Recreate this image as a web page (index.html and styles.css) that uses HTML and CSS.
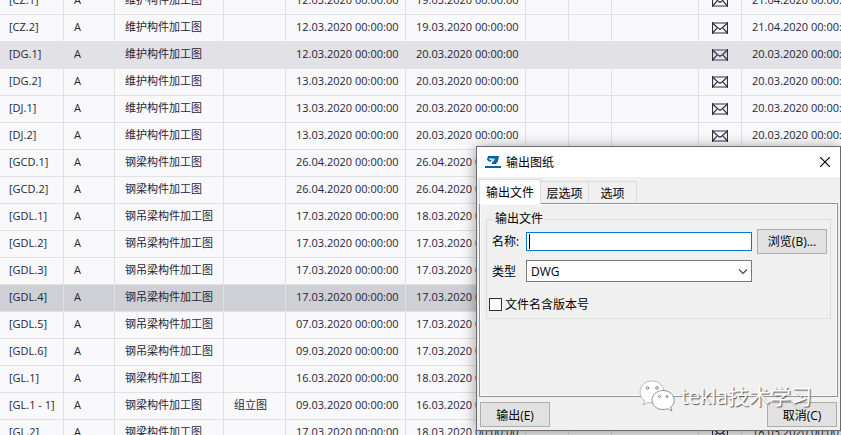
FILE: index.html
```html
<!DOCTYPE html>
<html lang="zh-CN">
<head>
  <meta charset="UTF-8">
  <title>输出图纸</title>
  <meta name="viewport" content="width=device-width, initial-scale=1.0">
  <link rel="stylesheet" href="styles.css">
</head>
<body>

  <svg class="defs" aria-hidden="true">
    <symbol id="mail" viewBox="0 0 16 12">
      <rect x="0" y="0" width="16" height="2" fill="#93929d"/>
      <rect x="0" y="10" width="16" height="2" fill="#93929d"/>
      <path d="M.5 0V12M15.5 0V12" fill="none" stroke="#2f2f45" stroke-width="1.2"/>
      <path d="M1 1.500L6 6L8 7.300L10 6L15 1.500M1 10.500L5 6.200M15 10.500L11 6.200" fill="none" stroke="#2f2f45" stroke-width="1.200"/>
    </symbol>
  </svg>

  <main class="list">
    <table class="drawings">
      <colgroup>
        <col class="c-mark"><col class="c-size"><col class="c-name"><col class="c-title">
        <col class="c-date"><col class="c-date"><col class="c-flag"><col class="c-flag">
        <col class="c-rev"><col class="c-flag"><col class="c-date">
      </colgroup>
      <tbody id="rows"></tbody>
    </table>
  </main>

  <section class="dialog" role="dialog" aria-labelledby="dlgTitle">
    <header class="titlebar">
      <svg class="logo" width="16" height="14" viewBox="0 0 16 14" aria-hidden="true">
        <rect x="0" y="11" width="16" height="2" fill="#0063a3"/>
        <path d="M3 1H14L13 6L11 9H7V7L9 6L7 5L5 7L2 5Z" fill="#0063a3"/>
        <path d="M3 4L6 3L8 4L10 3L9 6L6 5Z" fill="#d5e6f1"/>
      </svg>
      <h1 id="dlgTitle">输出图纸</h1>
      <button type="button" class="close" aria-label="关闭">
        <svg width="10" height="10" viewBox="0 0 10 10"><path d="M0 0L10 10M10 0L0 10" stroke="#000" stroke-width="1.2"/></svg>
      </button>
    </header>

    <form class="content" id="exportForm">
      <div class="tabs" role="tablist">
        <button type="button" class="tab active" role="tab" aria-selected="true">输出文件</button>
        <button type="button" class="tab" role="tab">层选项</button>
        <button type="button" class="tab" role="tab">选项</button>
      </div>

      <div class="pane" role="tabpanel">
        <fieldset class="group">
          <legend>输出文件</legend>
          <div class="field">
            <label for="name">名称:</label>
            <div class="box"><input type="text" id="name" class="name"><span class="caret"></span></div>
            <button type="button" class="btn">浏览(B)...</button>
          </div>
          <div class="field type">
            <label for="type">类型</label>
            <div class="box">
              <select id="type"><option>DWG</option></select>
              <svg class="arrow" width="10" height="6" viewBox="0 0 10 6" aria-hidden="true"><path d="M1 .5L5 4.5L9 .5" fill="none" stroke="#444" stroke-width="1.1"/></svg>
            </div>
          </div>
          <div class="check">
            <input type="checkbox" id="rev">
            <label for="rev">文件名含版本号</label>
          </div>
        </fieldset>
      </div>

      <div class="actions">
        <button type="button" class="btn">输出(E)</button>
        <button type="button" class="btn">取消(C)</button>
      </div>
    </form>

    <div class="watermark">
      <svg width="36" height="32" viewBox="0 0 36 32" aria-hidden="true">
        <g fill="#fff" stroke="#a0a0a0" stroke-width=".7">
          <path d="M13 1C6 1 1 6 1 12C1 16 3 19 6 21L4 25L9 22.500C17 24 25 20 25 12C25 6 20 1 13 1Z"/>
          <path stroke="#666" d="M24 10.500C17.500 10.500 13 15 13 20C13 25 17.500 29.500 24 29.500C26 29.500 27 29.200 28.500 28.700L33 31L31.800 27C34 25 35.300 23 35.300 20C35.300 15 30.500 10.500 24 10.500Z"/>
        </g>
        <g fill="#fff" stroke="#777" stroke-width=".9">
          <circle cx="8.500" cy="8" r="1.300"/><circle cx="18" cy="8" r="1.300"/>
          <circle cx="20.500" cy="16.500" r="1"/><circle cx="28" cy="16.500" r="1"/>
        </g>
      </svg>
      <span>tekla技术学习</span>
    </div>
  </section>

  <script src="script.js"></script>
</body>
</html>
```

FILE: styles.css
```css
* {
	box-sizing: border-box;
}

body {
	margin: 0;
	height: 100vh;
	overflow: hidden;
	position: relative;
	background-color: #f9f9fb;
	color: #252538;
	font-family: "Open Sans", "Noto Sans CJK SC", sans-serif;
	font-size: 11px;
}

.defs {
	display: none;
}

/* drawing list, scrolled part of a row down */
.list {
	height: 100vh;
	overflow: hidden;
}

.drawings {
	width: 862px;
	margin-top: -12px;
	table-layout: fixed;
	border-collapse: separate;
	border-spacing: 0;
}

.c-mark { width: 64px; }
.c-size { width: 51px; }
.c-name { width: 109px; }
.c-title { width: 62px; }
.c-date { width: 120px; }
.c-flag { width: 43px; }
.c-rev { width: 87px; }

.drawings td {
	height: 27px;
	padding: 0 0 2px 10px;
	border-right: 1px solid #e1e1e4;
	border-bottom: 1px solid #e1e1e4;
	line-height: 16px;
	white-space: nowrap;
}

.drawings td:first-child {
	padding-left: 9px;
}

.drawings td.mail {
	padding: 0;
	text-align: center;
}

.mail svg {
	display: block;
	margin: 0 auto;
}

.drawings .hover td {
	background-color: #e2e1e6;
	border-color: #e2e1e6;
}

.drawings .selected td {
	background-color: #cfd0d6;
}

/* export dialog */
.dialog {
	position: absolute;
	top: 146px;
	right: 0;
	width: 365px;
	border: 1px solid #6b6b6b;
	background-color: #f0f0f0;
	box-shadow: 0 2px 14px rgba(0, 0, 0, 0.4);
	color: #000;
	font-size: 12px;
}

.titlebar {
	display: flex;
	align-items: center;
	height: 30px;
	padding: 0 10px 0 8px;
	background-color: #fff;
}

.titlebar h1 {
	flex: 1;
	margin: 0 0 0 5px;
	font-size: 12px;
	font-weight: normal;
}

.close {
	display: flex;
	padding: 0;
	border: none;
	background: none;
}

.content {
	padding: 2px 2px 3px;
}

.tabs {
	display: flex;
	align-items: flex-end;
	height: 24px;
}

.tab {
	width: 48px;
	height: 22px;
	padding: 0;
	border: 1px solid #d9d9d9;
	border-left: none;
	border-bottom: none;
	background-color: #f0f0f0;
	color: #000;
	font: inherit;
}

.tab.active {
	position: relative;
	width: 62px;
	height: 25px;
	margin-bottom: -1px;
	border-left: 1px solid #d9d9d9;
	background-color: #fff;
}

.pane {
	height: 194px;
	padding: 6px 6px 0;
	border: 1px solid #8c9a9b;
	box-shadow: inset 0 0 0 1px #fafafa;
}

.group {
	height: 109px;
	margin: 0;
	padding: 0 3px 0 2px;
	border: 1px solid #dcdcdc;
}

.group legend {
	margin-left: 4px;
	padding: 0 2px;
	line-height: 18px;
}

.field {
	display: flex;
	align-items: center;
	height: 26px;
}

.field.type {
	height: 34px;
}

.field label {
	width: 37px;
	padding-left: 3px;
}

.box {
	position: relative;
	flex: 1;
}

.field.type .box {
	margin-right: 75px;
}

.box input,
.box select {
	display: block;
	width: 100%;
	border: 1px solid #7a7a7a;
	border-radius: 0;
	background-color: #fff;
	color: #000;
	font: inherit;
	outline: none;
	appearance: none;
}

.box input {
	height: 19px;
	padding: 0 4px;
	border-color: #0078d7;
}

.box select {
	height: 22px;
	padding: 0 4px;
}

.caret {
	position: absolute;
	top: 2px;
	left: 3px;
	width: 1px;
	height: 15px;
	background-color: #000;
}

.arrow {
	position: absolute;
	top: 9px;
	right: 4px;
	pointer-events: none;
}

.btn {
	width: 70px;
	height: 25px;
	padding: 0;
	border: 1px solid #adadad;
	background-color: #e1e1e1;
	color: #000;
	font: inherit;
}

.field .btn {
	margin-left: 5px;
}

.check {
	display: flex;
	align-items: center;
	height: 32px;
}

.check input {
	width: 13px;
	height: 13px;
	margin: 0 3px 0 0;
	border: 1px solid #333;
	background-color: #fff;
	appearance: none;
}

.actions {
	display: flex;
	justify-content: space-between;
	padding: 5px 1px 0;
}

.watermark {
	position: absolute;
	right: 28px;
	bottom: 18px;
	display: flex;
	align-items: center;
	gap: 6px;
	color: #fff;
	font-size: 21px;
	line-height: 28px;
	text-shadow: 1px 1px 1px #555;
	pointer-events: none;
}
```

FILE: script.js
```js
const rows = [
  ["[CZ.1]", "维护构件加工图", "", "12.03.2020", "19.03.2020", "21.04.2020"],
  ["[CZ.2]", "维护构件加工图", "", "12.03.2020", "19.03.2020", "21.04.2020"],
  ["[DG.1]", "维护构件加工图", "", "12.03.2020", "20.03.2020", "20.03.2020", "hover"],
  ["[DG.2]", "维护构件加工图", "", "13.03.2020", "20.03.2020", "20.03.2020"],
  ["[DJ.1]", "维护构件加工图", "", "13.03.2020", "20.03.2020", "20.03.2020"],
  ["[DJ.2]", "维护构件加工图", "", "13.03.2020", "20.03.2020", "20.03.2020"],
  ["[GCD.1]", "钢梁构件加工图", "", "26.04.2020", "26.04.2020", "26.04.2020"],
  ["[GCD.2]", "钢梁构件加工图", "", "26.04.2020", "26.04.2020", "26.04.2020"],
  ["[GDL.1]", "钢吊梁构件加工图", "", "17.03.2020", "18.03.2020", "18.03.2020"],
  ["[GDL.2]", "钢吊梁构件加工图", "", "17.03.2020", "17.03.2020", "18.03.2020"],
  ["[GDL.3]", "钢吊梁构件加工图", "", "17.03.2020", "17.03.2020", "18.03.2020"],
  ["[GDL.4]", "钢吊梁构件加工图", "", "17.03.2020", "17.03.2020", "18.03.2020", "selected"],
  ["[GDL.5]", "钢吊梁构件加工图", "", "07.03.2020", "17.03.2020", "18.03.2020"],
  ["[GDL.6]", "钢吊梁构件加工图", "", "09.03.2020", "17.03.2020", "18.03.2020"],
  ["[GL.1]", "钢梁构件加工图", "", "16.03.2020", "18.03.2020", "18.03.2020"],
  ["[GL.1 - 1]", "钢梁构件加工图", "组立图", "09.03.2020", "16.03.2020", "18.03.2020"],
  ["[GL.2]", "钢梁构件加工图", "", "17.03.2020", "18.03.2020", "18.03.2020"]
];

const time = " 00:00:00";
const mail = '<svg width="16" height="12"><use href="#mail"/></svg>';

document.getElementById("rows").innerHTML = rows.map(function (r) {
  return `<tr class="${r[6] || ""}"><td>${r[0]}</td><td>A</td><td>${r[1]}</td><td>${r[2]}</td>` +
    `<td>${r[3]}${time}</td><td>${r[4]}${time}</td><td></td><td></td><td></td>` +
    `<td class="mail">${mail}</td><td>${r[5]}${time}</td></tr>`;
}).join("");
```
